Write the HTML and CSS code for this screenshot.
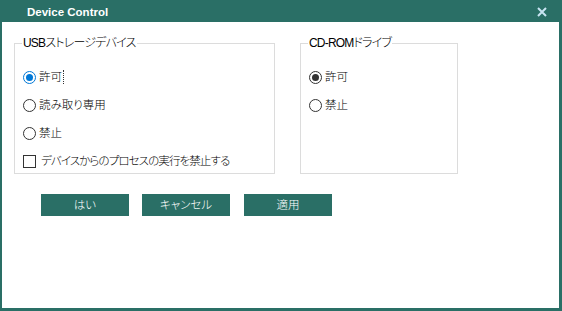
FILE: index.html
```html
<!DOCTYPE html>
<html>
	<head>
		<meta charset="utf-8" />
		<title>Device Control</title>
		<link rel="stylesheet" href="styles.css">
	</head>
	<body>
		<div class="window">
			<div class="titlebar">
				<span class="title">Device Control</span>
				<svg class="close" width="10" height="10" viewBox="0 0 10 10"><path d="M1 1 L9 9 M9 1 L1 9" stroke="#c8e4f2" stroke-width="2" /></svg>
			</div>
			<div class="content">
				<div class="groups">
					<fieldset class="group group-usb">
						<legend>USBストレージデバイス</legend>
						<div class="option"><span class="radio checked focus"></span><span class="label focused">許可</span></div>
						<div class="option"><span class="radio"></span><span class="label">読み取り専用</span></div>
						<div class="option"><span class="radio"></span><span class="label">禁止</span></div>
						<div class="option"><span class="check"></span><span class="label label-check">デバイスからのプロセスの実行を禁止する</span></div>
					</fieldset>
					<fieldset class="group group-cd">
						<legend>CD-ROMドライブ</legend>
						<div class="option"><span class="radio checked"></span><span class="label">許可</span></div>
						<div class="option"><span class="radio"></span><span class="label">禁止</span></div>
					</fieldset>
				</div>
				<div class="buttons">
					<div class="button">はい</div>
					<div class="button">キャンセル</div>
					<div class="button">適用</div>
				</div>
			</div>
		</div>
	</body>
</html>
```

FILE: styles.css
```css
body {
	margin: 0; padding: 0;
	background-color: #fff;
	font: 300 11.5px "Liberation Sans", "Noto Sans CJK JP", sans-serif;
	font-feature-settings: "palt";
	color: #000;
}
.window {
	width: 562px; height: 311px;
	box-sizing: border-box;
	border-left: 2px solid #2a6f66; border-right: 3px solid #2a6f66; border-bottom: 3px solid #2a6f66;
	background-color: #fff;
}
.titlebar {
	height: 22px;
	margin-left: -2px; margin-right: -3px;
	padding: 1px 15px 0 27px;
	box-sizing: border-box;
	display: flex; align-items: center; justify-content: space-between;
	background-color: #2a6f66;
}
.title {
	color: #fff;
	font-weight: bold; font-size: 11.5px;
}
.content {
	padding: 14px 0 0 12px;
}
.groups {
	display: flex;
	gap: 25px;
}
.group {
	margin: 0; padding: 0 0 0 8px;
	box-sizing: border-box;
	height: 138px;
	border: 1px solid #dcdcdc;
	display: flex; flex-direction: column;
	gap: 4px;
}
.group legend {
	padding: 0 1px; margin-left: -1px;
	line-height: 14px;
	font-size: 12px;
	letter-spacing: -0.8px;
}
.group-usb { width: 261px; }
.group-cd { width: 158px; }
.group .option:first-of-type { margin-top: 15px; }
.option {
	height: 24px;
	display: flex; align-items: center;
}
.radio {
	width: 11px; height: 11px;
	border: 1px solid #333;
	border-radius: 50%;
	position: relative;
	margin-right: 3px;
}
.radio.checked::after {
	content: "";
	position: absolute;
	left: 2px; top: 2px;
	width: 7px; height: 7px;
	border-radius: 50%;
	background: #333;
}
.radio.focus { border-color: #0078d7; }
.radio.focus::after { background: #0078d7; }
.check {
	width: 11px; height: 11px;
	border: 1px solid #333;
	margin-right: 5px;
}
.label {
	line-height: 14px;
}
.label-check {
	letter-spacing: -0.9px;
}
.focused {
	padding-right: 1px;
	border-right: 1px dotted #333;
}
.buttons {
	margin: 20px 0 0 27px;
	display: flex;
	gap: 13px;
}
.button {
	width: 88px; height: 22px;
	line-height: 22px;
	text-align: center;
	color: #fff;
	background: #2a6f66;
}
.button:last-child { margin-left: 1px; }
```
